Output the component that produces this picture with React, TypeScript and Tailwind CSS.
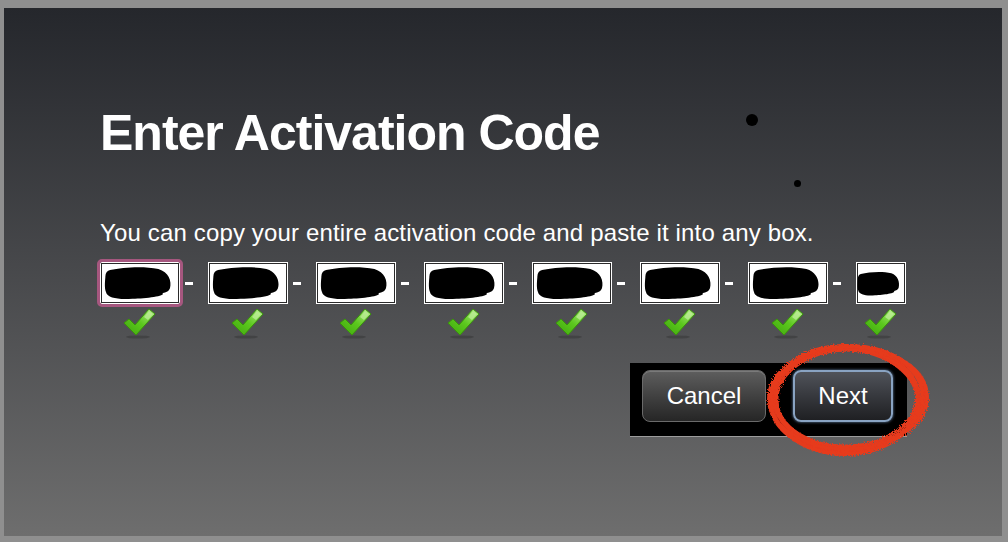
const codes = [
  { width: 80, focused: true },
  { width: 80 },
  { width: 80 },
  { width: 80 },
  { width: 80 },
  { width: 80 },
  { width: 80 },
  { width: 50, last: true },
];

const Blob = ({ small }: { small?: boolean }) => (
  <svg
    viewBox="0 0 100 60"
    preserveAspectRatio="none"
    className={small ? "absolute left-[1px] top-[9px] h-[26px] w-[43px]" : "absolute left-[4px] top-[4px] h-[35px] w-[68px]"}
  >
    <path
      d="M9,7 C28,2 58,0 80,5 C95,10 100,26 97,38 C95,45 88,45 86,47 C91,51 62,56 42,56 C22,58 5,55 3,45 C0,37 2,22 2,18 C2,12 5,8 9,7 Z"
      fill="#000"
    />
  </svg>
);

const Check = () => (
  <svg width="32" height="30" viewBox="0 0 32 30" className="mt-[5px]">
    <defs>
      <linearGradient id="chk" x1="0" y1="1" x2="1" y2="0">
        <stop offset="0" stopColor="#3ea60c" />
        <stop offset="0.5" stopColor="#5cc81e" />
        <stop offset="1" stopColor="#b9ec90" />
      </linearGradient>
    </defs>
    <ellipse cx="14" cy="28" rx="12" ry="1.6" fill="#000" opacity="0.18" />
    <polygon points="0,14 5,10 11,16 25,0 31,5 12,26" fill="url(#chk)" stroke="#3a930c" strokeWidth="1" />
    <polygon points="20,8 25,2 29,5 24,11" fill="#c2f09c" opacity="0.7" />
  </svg>
);

export default function App() {
  return (
    <div className="relative h-[542px] w-[1008px] bg-[#8f8f8f] pb-[6px] pl-[4px] pr-[6px] pt-[8px] font-['Liberation_Sans',Arial,sans-serif] overflow-hidden">
      <div className="h-full bg-linear-to-b from-[#25272c] to-[#6e6e6e] pl-[96px] pt-[100px] text-white">
        <h1 className="text-[50px] font-bold leading-none tracking-[-1px]">Enter Activation Code</h1>
        <p className="mt-[63px] text-[24px] leading-none tracking-[0.15px]">
          You can copy your entire activation code and paste it into any box.
        </p>
        <div className="inline-flex flex-col">
          <div className="mt-[17px] flex items-start">
            {codes.map((c, i) => (
              <div key={i} className="flex items-start">
                <div className="flex flex-col items-center">
                  <div
                    className={
                      (c.focused ? "outline-3 outline-[#a6577f] rounded-[2px] " : "") +
                      "relative h-[42px] bg-white p-[1px]"
                    }
                    style={{ width: c.width }}
                  >
                    <div className="h-full w-full border border-[#2a2a2a] bg-white" />
                    <Blob small={c.last} />
                  </div>
                  <Check />
                </div>
                {!c.last && <div className="ml-[5px] mr-[15px] mt-[20px] h-[3px] w-[8px] bg-white" />}
              </div>
            ))}
          </div>
          <div className="mt-[24px] flex gap-[27px] self-end border-b border-[#9c9c9c] bg-black pb-[14px] pl-[12px] pr-[14px] pt-[7px] -mr-[1px]">
            <button className="h-[52px] w-[124px] rounded-[8px] border border-[#6a6a6a] bg-linear-to-b from-[#5e5e5e] to-[#262626] text-[24px] text-white shadow-[inset_0_1px_0_#7a7a7a]">
              Cancel
            </button>
            <button className="h-[52px] w-[100px] rounded-[8px] border-2 border-[#89a3c2] bg-linear-to-b from-[#50535a] to-[#1f2023] text-[24px] text-white shadow-[0_0_3px_#6d8bb0]">
              Next
            </button>
          </div>
        </div>
      </div>

      <div className="absolute left-[746px] top-[114px] h-[12px] w-[12px] rounded-full bg-black" />
      <div className="absolute left-[794px] top-[180px] h-[7px] w-[7px] rounded-full bg-black" />

      <svg className="absolute left-[758px] top-[338px]" width="180" height="130" viewBox="0 0 180 130">
        <defs>
          <filter id="rough" x="-10%" y="-10%" width="120%" height="120%">
            <feTurbulence type="fractalNoise" baseFrequency="0.9" numOctaves="2" seed="3" />
            <feDisplacementMap in="SourceGraphic" scale="5" />
          </filter>
        </defs>
        <g fill="none" stroke="#e63a1e" filter="url(#rough)" strokeLinecap="round">
          <ellipse cx="89" cy="61" rx="76" ry="52" strokeWidth="5" transform="rotate(-4 89 61)" />
          <ellipse cx="88" cy="61" rx="72" ry="50" strokeWidth="5" transform="rotate(3 88 61)" />
          <ellipse cx="90" cy="60" rx="79" ry="51" strokeWidth="4" transform="rotate(-1 90 60)" />
          <ellipse cx="87" cy="62" rx="74" ry="54" strokeWidth="4" />
          <ellipse cx="89" cy="60" rx="70" ry="48" strokeWidth="3" transform="rotate(-2 89 60)" />
        </g>
      </svg>
    </div>
  );
}
